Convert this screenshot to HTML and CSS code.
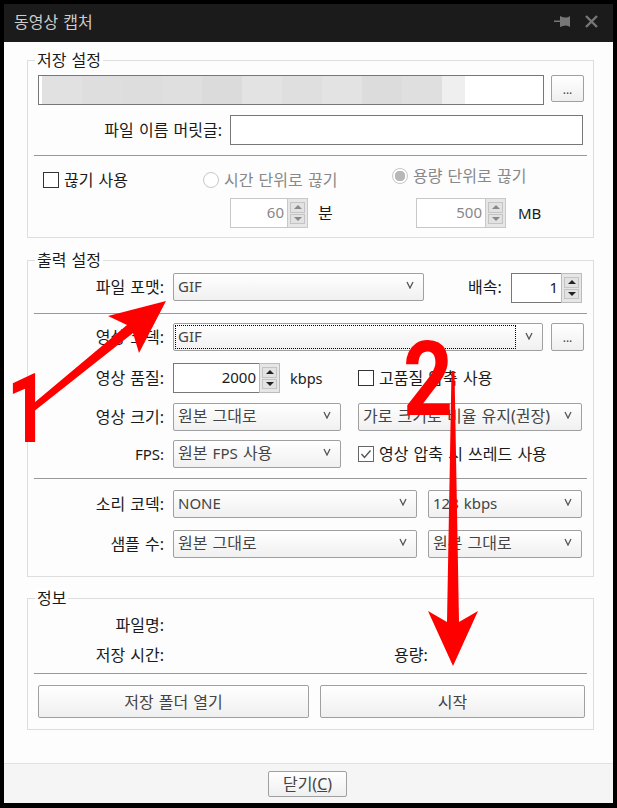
FILE: index.html
```html
<!DOCTYPE html>
<html lang="ko">
<head>
  <meta charset="UTF-8" />
  <title>동영상 캡처</title>
  <link rel="stylesheet" href="styles.css">
</head>
<body>
  <svg class="defs" width="0" height="0">
    <symbol id="chev" viewBox="0 0 8 8"><path d="M1 1 L4 7 L7 1" fill="none" stroke="#555" stroke-width="1.3"/></symbol>
  </svg>

  <div class="window">
    <div class="titlebar">
      <span class="title">동영상 캡처</span>
      <svg class="pin" width="17" height="13" viewBox="0 0 17 13"><path d="M0 5.5 H6 L6 1 Q9 2.5 12 2.5 Q14 2.5 16 1 V12 Q14 10.5 12 10.5 Q9 10.5 6 12 V7 H0 Z" fill="#777"/></svg>
      <svg class="close" width="13" height="13" viewBox="0 0 13 13"><path d="M1 1 L12 12 M12 1 L1 12" stroke="#777" stroke-width="2.4" fill="none"/></svg>
    </div>

    <div class="main">
      <fieldset class="group g1">
        <legend>저장 설정</legend>
        <div class="row path-row">
          <div class="textbox path"><div class="blur"></div></div>
          <div class="btn dots">...</div>
        </div>
        <div class="row prefix-row">
          <span class="lbl prefix-lbl">파일 이름 머릿글:</span>
          <div class="textbox prefix"></div>
        </div>
        <div class="sep"></div>
        <div class="row split-row">
          <span class="check split-check"><i class="box"></i>끊기 사용</span>
          <span class="radio radio-time off"><i class="dot"></i>시간 단위로 끊기</span>
          <span class="radio radio-size off on"><i class="dot"></i>용량 단위로 끊기</span>
        </div>
        <div class="row split-values">
          <div class="spin off w78"><span class="val">60</span><span class="arrows"><b class="up"></b><b class="down"></b></span></div>
          <span class="unit unit-min">분</span>
          <div class="spin off w90"><span class="val">500</span><span class="arrows"><b class="up"></b><b class="down"></b></span></div>
          <span class="unit unit-mb">MB</span>
        </div>
      </fieldset>

      <fieldset class="group g2">
        <legend>출력 설정</legend>
        <div class="row top">
          <span class="lbl">파일 포맷:</span>
          <div class="combo w251"><span class="val latin">GIF</span><svg class="chev"><use href="#chev"/></svg></div>
          <span class="speed-lbl">배속:</span>
          <div class="spin w71"><span class="val">1</span><span class="arrows"><b class="up"></b><b class="down"></b></span></div>
        </div>
        <div class="sep"></div>
        <div class="row r-codec">
          <span class="lbl">영상 코덱:</span>
          <div class="combo focus w370"><span class="val latin">GIF</span><svg class="chev"><use href="#chev"/></svg></div>
          <div class="btn dots dots-low">...</div>
        </div>
        <div class="row r-quality">
          <span class="lbl">영상 품질:</span>
          <div class="spin w107"><span class="val">2000</span><span class="arrows"><b class="up"></b><b class="down"></b></span></div>
          <span class="kbps">kbps</span>
          <span class="check"><i class="box"></i>고품질 압축 사용</span>
        </div>
        <div class="row r-size">
          <span class="lbl">영상 크기:</span>
          <div class="combo w168"><span class="val">원본 그대로</span><svg class="chev"><use href="#chev"/></svg></div>
          <div class="combo w224 ml17"><span class="val">가로 크기로 비율 유지(권장)</span><svg class="chev"><use href="#chev"/></svg></div>
        </div>
        <div class="row r-fps">
          <span class="lbl latin">FPS:</span>
          <div class="combo w168"><span class="val">원본 <span class="latin">FPS</span> 사용</span><svg class="chev"><use href="#chev"/></svg></div>
          <span class="check checked ml17"><i class="box"><svg width="14" height="14" viewBox="0 0 14 14"><path d="M2.5 7 L5.5 10.5 L11.5 3.5" fill="none" stroke="#555" stroke-width="1.4"/></svg></i>영상 압축 시 쓰레드 사용</span>
        </div>
        <div class="sep"></div>
        <div class="row r-audio">
          <span class="lbl">소리 코덱:</span>
          <div class="combo w244"><span class="val latin">NONE</span><svg class="chev"><use href="#chev"/></svg></div>
          <div class="combo w154 ml11"><span class="val latin">128 kbps</span><svg class="chev"><use href="#chev"/></svg></div>
        </div>
        <div class="row r-sample">
          <span class="lbl">샘플 수:</span>
          <div class="combo w244"><span class="val">원본 그대로</span><svg class="chev"><use href="#chev"/></svg></div>
          <div class="combo w154 ml11"><span class="val">원본 그대로</span><svg class="chev"><use href="#chev"/></svg></div>
        </div>
      </fieldset>

      <fieldset class="group g3">
        <legend>정보</legend>
        <div class="row info-row">
          <span class="lbl">파일명:</span>
        </div>
        <div class="row info-row">
          <span class="lbl">저장 시간:</span>
          <span class="size-lbl">용량:</span>
        </div>
        <div class="sep"></div>
        <div class="row actions">
          <div class="btn open">저장 폴더 열기</div>
          <div class="btn start">시작</div>
        </div>
      </fieldset>
    </div>

    <div class="footer">
      <div class="btn closebtn">닫기(<u>C</u>)</div>
    </div>
  </div>

  <!-- red annotations drawn over the screenshot -->
  <svg class="marks" width="617" height="808" viewBox="0 0 617 808">
    <polygon points="28,416 133,333 139,353 166,301 108,316 127,325 28,408" fill="#f00"/>
    <polygon points="451.5,371 454.5,371 459,622 478,611 453,666 428,611 447,622" fill="#f00"/>
  </svg>
  <span class="num num1">1</span>
  <span class="num num2">2</span>
</body>
</html>
```

FILE: styles.css
```css
* {
  box-sizing: border-box;
}

body {
  margin: 0;
  width: 617px;
  height: 808px;
  overflow: hidden;
  background: #000;
  font-family: "Noto Sans", "Noto Sans CJK KR", sans-serif;
  font-size: 16px;
  line-height: 20px;
  word-spacing: 1px;
  color: #1a1a1a;
}

.latin {
  font-size: 15px;
}

.defs {
  position: absolute;
}

.window {
  margin: 4px 0 0 4px;
  width: 609px;
  height: 799px;
  display: flex;
  flex-direction: column;
  background: #fdfdfd;
}

.titlebar {
  height: 38px;
  flex: none;
  display: flex;
  align-items: center;
  padding: 0 15px 3px 10px;
  background: #1b1b1b;
}

.title {
  flex: 1;
  color: #ccc;
}

.close {
  margin-left: 14px;
}

.main {
  flex: 1;
  padding: 8px 19px 0 23px;
}

/* group boxes */
.group {
  margin: 0 0 12px;
  padding: 0;
  min-width: 0;
  width: 567px;
  border: 1px solid #ddd;
}

.group legend {
  margin-left: 7px;
  padding: 0 2px;
  background: #fff;
  line-height: 20px;
}

.row {
  display: flex;
  align-items: center;
}

.top {
  align-items: flex-start;
}

.top .lbl {
  margin-top: 4px;
}

.lbl {
  flex: none;
  width: 136px;
  margin-right: 9px;
  text-align: right;
}

.sep {
  height: 1px;
  margin: 10px 6px 0;
  background: #999;
}

/* inputs */
.textbox {
  border: 1px solid #777;
  background: #fff;
}

.path-row {
  align-items: flex-start;
  padding: 5px 0 0 10px;
}

.path {
  width: 506px;
  height: 30px;
  margin-right: 7px;
}

.blur {
  width: 423px;
  height: 28px;
  margin-left: 3px;
  background: linear-gradient(to right,
    #e0e1e0 0 40px, #dddedd 40px 80px, #dcdddc 80px 120px, #dedfde 120px 160px,
    #dadbda 160px 200px, #e3e3e3 200px 240px, #dfdfdf 240px 280px, #e2e3e2 280px 320px,
    #dcdcdc 320px 360px, #dfdfdf 360px 400px, #efefef 400px 423px);
}

.prefix-row {
  margin-top: 10px;
}

.prefix-lbl {
  width: 194px;
  margin-right: 8px;
}

.prefix {
  width: 353px;
  height: 30px;
}

.btn {
  display: flex;
  align-items: center;
  justify-content: center;
  border: 1px solid #a0a0a0;
  border-radius: 2px;
  background: linear-gradient(#fff, #efefef);
  color: #444;
}

.dots {
  flex: none;
  width: 33px;
  height: 27px;
  padding-top: 2px;
  font-size: 12px;
}

.dots-low {
  height: 28px;
  margin-left: 8px;
}

.combo {
  flex: none;
  height: 28px;
  display: flex;
  align-items: center;
  padding: 0 9px 2px 4px;
  border: 1px solid #a0a0a0;
  border-radius: 2px;
  background: linear-gradient(#fff, #f0f0f0);
  color: #444;
}

.combo .val {
  flex: 1;
  white-space: nowrap;
}

.combo.focus {
  padding: 1px 9px 1px 1px;
}

.combo.focus .val {
  height: 24px;
  margin-right: 9px;
  padding-left: 2px;
  border: 1px dotted #000;
  line-height: 21px;
}

.chev {
  flex: none;
  width: 8px;
  height: 8px;
  margin-top: -3px;
}

.w251 { width: 251px; }
.w370 { width: 370px; }
.w168 { width: 168px; }
.w224 { width: 224px; }
.w244 { width: 244px; }
.w154 { width: 154px; }
.ml17 { margin-left: 17px; }
.ml11 { margin-left: 11px; }

/* spin boxes */
.spin {
  flex: none;
  height: 30px;
  display: flex;
  border: 1px solid #777;
  border-right: none;
  background: #fff;
}

.spin .val {
  flex: 1;
  padding-right: 3px;
  font-size: 15px;
  text-align: right;
  line-height: 26px;
}

.arrows {
  flex: none;
  width: 21px;
  margin: -1px 0;
  padding: 3px 2px;
  display: flex;
  flex-direction: column;
  gap: 1px;
  border: 1px solid #bbb;
  background: #e6e6e6;
}

.arrows b {
  flex: 1;
  display: flex;
  align-items: center;
  justify-content: center;
  background: #e2e2e2;
  border: 1px solid #c4c4c4;
}

.arrows b::before {
  content: "";
  border-left: 4px solid transparent;
  border-right: 4px solid transparent;
}

.arrows .up::before {
  border-bottom: 4px solid #222;
}

.arrows .down::before {
  border-top: 4px solid #222;
}

.spin.off {
  border-color: #c8c8c8;
}

.spin.off .val {
  color: #888;
}

.spin.off .arrows {
  border-color: #c8c8c8;
}

.spin.off .up::before {
  border-bottom-color: #888;
}

.spin.off .down::before {
  border-top-color: #888;
}

.w78 { width: 78px; }
.w90 { width: 90px; }
.w71 { width: 71px; }
.w107 { width: 107px; }

/* checks and radios */
.check,
.radio {
  display: flex;
  align-items: center;
  white-space: nowrap;
}

.box {
  flex: none;
  width: 16px;
  height: 16px;
  margin-right: 5px;
  border: 1px solid #333;
  background: #fff;
  display: flex;
}

.checked .box {
  border-color: #666;
}

.dot {
  flex: none;
  width: 16px;
  height: 16px;
  margin-right: 5px;
  border: 1px solid #c8c8c8;
  border-radius: 50%;
  background: #fff;
}

.radio.off {
  color: #888;
}

.radio.on .dot {
  border: 1px solid #c8c8c8;
  background: radial-gradient(circle, #b8b8b8 0 5px, #fff 5.5px);
}

.split-row {
  height: 30px;
  margin-top: 9px;
  padding-left: 15px;
}

.split-check {
  width: 160px;
}

.radio-time {
  width: 189px;
}

.radio-size {
  margin-top: -8px;
}

.split-values {
  margin-top: 3px;
  padding: 0 0 9px 202px;
}

.unit-min {
  width: 108px;
  padding-left: 10px;
}

.unit-mb {
  padding-left: 12px;
  font-size: 15px;
}

/* output settings */
.g2 {
  margin-bottom: 11px;
}

.g2 legend {
  margin-bottom: 3px;
}

.speed-lbl {
  width: 32px;
  margin: 4px 11px 0 44px;
  white-space: nowrap;
}

.r-codec {
  margin-top: 9px;
}

.r-quality {
  margin-top: 12px;
}

.kbps {
  width: 78px;
  padding-left: 10px;
  font-size: 14.5px;
}

.r-size {
  margin-top: 10px;
}

.r-fps {
  margin-top: 9px;
}

.r-audio {
  margin-top: 11px;
}

.r-sample {
  margin-top: 12px;
  margin-bottom: 18px;
}

/* info */
.info-row {
  height: 20px;
  margin-top: 10px;
}

.g3 .info-row:first-of-type {
  margin-top: 7px;
}

.size-lbl {
  margin-left: 221px;
}

.g3 .sep {
  margin-top: 8px;
}

.actions {
  margin-top: 11px;
  padding: 0 0 11px 10px;
}

.open {
  width: 271px;
  height: 33px;
  margin-right: 11px;
}

.start {
  width: 265px;
  height: 33px;
}

/* footer */
.footer {
  flex: none;
  height: 40px;
  padding: 7px 2px 0 0;
  display: flex;
  justify-content: center;
  align-items: flex-start;
  border-top: 1px solid #e2e2e2;
  background: #f5f5f5;
}

.closebtn {
  width: 79px;
  height: 26px;
  word-spacing: 0;
}

/* annotations */
.marks {
  position: absolute;
  left: 0;
  top: 0;
}

.num {
  position: absolute;
  font-family: Roboto, sans-serif;
  font-weight: 700;
  color: #f00;
  transform-origin: left center;
}

.num1 {
  left: 7px;
  top: 354px;
  font-size: 97px;
  line-height: 110px;
  transform: scaleX(0.74);
}

.num2 {
  left: 403px;
  top: 320px;
  font-size: 104px;
  line-height: 120px;
  transform: scaleX(0.84);
}
```
